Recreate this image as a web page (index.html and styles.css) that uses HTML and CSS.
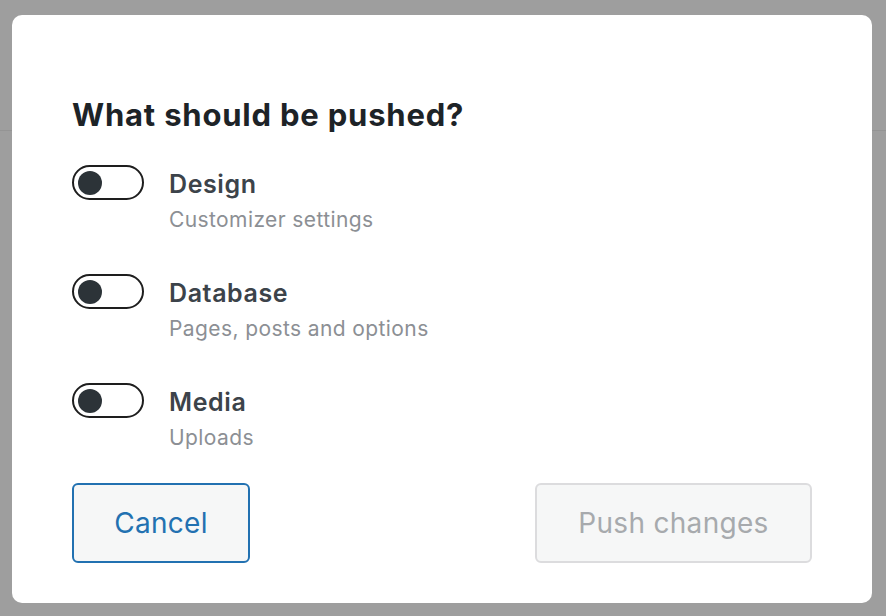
FILE: index.html
```html
<!DOCTYPE html>
<html>
<head>
  <title>Push changes</title>
  <link rel="stylesheet" href="styles.css">
</head>
<body>
  <div class="page">
    <div class="page-header"></div>
  </div>

  <div class="modal">
    <h2 class="modal-title">What should be pushed?</h2>

    <div class="options">
      <label class="option">
        <span class="toggle"><span class="toggle-knob"></span></span>
        <span class="option-text">
          <span class="option-name">Design</span>
          <span class="option-desc">Customizer settings</span>
        </span>
      </label>
      <label class="option">
        <span class="toggle"><span class="toggle-knob"></span></span>
        <span class="option-text">
          <span class="option-name">Database</span>
          <span class="option-desc">Pages, posts and options</span>
        </span>
      </label>
      <label class="option">
        <span class="toggle"><span class="toggle-knob"></span></span>
        <span class="option-text">
          <span class="option-name">Media</span>
          <span class="option-desc">Uploads</span>
        </span>
      </label>
    </div>

    <div class="actions">
      <button class="btn btn-cancel">Cancel</button>
      <button class="btn btn-push" disabled>Push changes</button>
    </div>
  </div>
</body>
</html>
```

FILE: styles.css
```css
body {
  margin: 0;
  width: 886px;
  height: 616px;
  overflow: hidden;
  background-color: #9E9E9E;
  font-family: Inter, 'Noto Sans', sans-serif;
  color: #1D2327;
}

/* Page behind the overlay */
.page-header {
  height: 130px;
  border-bottom: 1px solid #949494;
}

.modal {
  position: absolute;
  top: 15px;
  left: 12px;
  width: 860px;
  height: 588px;
  box-sizing: border-box;
  padding: 81px 60px 40px;
  background: #FFFFFF;
  border-radius: 10px;
  display: flex;
  flex-direction: column;
}

.modal-title {
  margin: 0;
  font-size: 31px;
  line-height: 38px;
  font-weight: 700;
  color: #1D2327;
  letter-spacing: 0.8px;
}

.options {
  margin-top: 31px;
  display: flex;
  flex-direction: column;
  gap: 41px;
}

.option {
  display: flex;
  align-items: flex-start;
  gap: 25px;
  cursor: pointer;
}

.toggle {
  width: 72px;
  height: 35px;
  box-sizing: border-box;
  border: 2px solid #1E1E1E;
  border-radius: 18px;
  display: flex;
  align-items: center;
  padding-left: 4px;
  flex-shrink: 0;
}

.toggle-knob {
  width: 24px;
  height: 24px;
  border-radius: 50%;
  background: #2C3338;
}

.option-text {
  display: flex;
  flex-direction: column;
  padding-top: 4px;
}

.option-name {
  font-size: 25px;
  line-height: 30px;
  font-weight: 600;
  letter-spacing: 0.6px;
  color: #3C434A;
}

.option-desc {
  margin-top: 8px;
  font-size: 21px;
  line-height: 26px;
  letter-spacing: 0.4px;
  color: #8C8F94;
}

.actions {
  margin-top: auto;
  display: flex;
  justify-content: space-between;
}

.btn {
  height: 80px;
  box-sizing: border-box;
  border-radius: 6px;
  border: 2px solid;
  background: #F6F7F7;
  font-family: inherit;
  font-size: 28px;
  letter-spacing: 0.3px;
  cursor: pointer;
}

.btn-cancel {
  width: 178px;
  border-color: #2271B1;
  color: #2271B1;
}

.btn-push {
  width: 277px;
  border-color: #DCDCDE;
  color: #A7AAAD;
  cursor: default;
}
```
